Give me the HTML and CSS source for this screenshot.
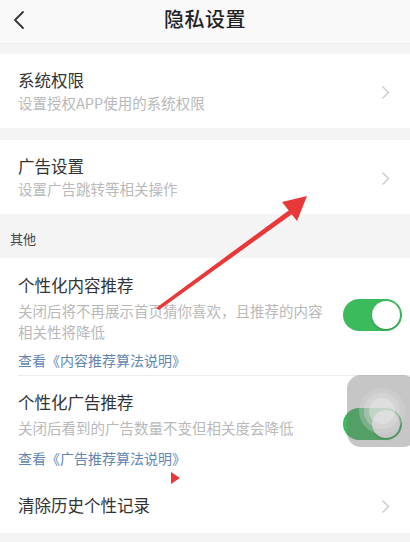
FILE: index.html
```html
<!DOCTYPE html>
<html lang="zh-CN">
<head>
  <meta charset="UTF-8" />
  <meta name="viewport" content="width=device-width, initial-scale=1.0"/>
  <title>隐私设置</title>
  <link rel="stylesheet" href="styles.css">
</head>
<body>
  <header class="nav">
    <svg class="back" width="12" height="20" viewBox="0 0 12 20"><path d="M10 2 L2 10 L10 18" fill="none" stroke="#333" stroke-width="1.8" stroke-linecap="round" stroke-linejoin="round"/></svg>
    <h1>隐私设置</h1>
  </header>

  <main class="page">
    <div class="card">
      <div class="row">
        <div class="text">
          <div class="title">系统权限</div>
          <div class="desc">设置授权APP使用的系统权限</div>
        </div>
        <svg class="chev" width="9" height="15" viewBox="0 0 9 15"><path d="M1.5 1.5 L7.5 7.5 L1.5 13.5" fill="none" stroke="#cfcfcf" stroke-width="1.5"/></svg>
      </div>
    </div>

    <div class="card">
      <div class="row">
        <div class="text">
          <div class="title">广告设置</div>
          <div class="desc">设置广告跳转等相关操作</div>
        </div>
        <svg class="chev" width="9" height="15" viewBox="0 0 9 15"><path d="M1.5 1.5 L7.5 7.5 L1.5 13.5" fill="none" stroke="#cfcfcf" stroke-width="1.5"/></svg>
      </div>
    </div>

    <div class="section-label">其他</div>

    <div class="card group">
      <div class="toggle-item">
        <div class="toggle-top">
          <div class="text">
            <div class="title">个性化内容推荐</div>
            <div class="desc">关闭后将不再展示首页猜你喜欢，且推荐的内容相关性将降低</div>
          </div>
          <span class="switch on"><span class="knob"></span></span>
        </div>
        <a class="link">查看《内容推荐算法说明》</a>
      </div>

      <div class="toggle-item second">
        <div class="toggle-top">
          <div class="text">
            <div class="title">个性化广告推荐</div>
            <div class="desc">关闭后看到的广告数量不变但相关度会降低</div>
          </div>
          <span class="switch on"><span class="knob"></span></span>
        </div>
        <a class="link">查看《广告推荐算法说明》</a>
      </div>

      <div class="row plain">
        <div class="title">清除历史个性记录</div>
        <svg class="chev" width="9" height="15" viewBox="0 0 9 15"><path d="M1.5 1.5 L7.5 7.5 L1.5 13.5" fill="none" stroke="#cfcfcf" stroke-width="1.5"/></svg>
      </div>
    </div>
  </main>

  <!-- floating assistive touch button -->
  <div class="assist">
    <span class="ring r1"></span>
    <span class="ring r2"></span>
    <span class="ring r3"></span>
  </div>

  <!-- red annotation marks -->
  <svg class="annot" width="410" height="542" viewBox="0 0 410 542">
    <path d="M156 308 L292 208 L295 212 L159 310 Z" fill="#e8383a"/>
    <path d="M307 196 L282 202 L297 221 Z" fill="#e8383a"/>
    <path d="M171 472 L180 478 L171 484 Z" fill="#e8383a"/>
  </svg>
</body>
</html>
```

FILE: styles.css
```css
:root {
  --bg: #f4f4f5;
  --fg: #333333;
  --subtle: #b9b9b9;
  --link: #5f87b2;
  --green: #3bbb5c;
  --line: #ededed;
}

* {
  margin: 0;
  padding: 0;
  box-sizing: border-box;
}

body {
  width: 410px;
  height: 542px;
  overflow: hidden;
  background: var(--bg);
  color: var(--fg);
  font-family: "Noto Sans CJK SC", "Noto Sans", sans-serif;
  position: relative;
}

.nav {
  height: 44px;
  background: #f9f9f9;
  border-bottom: 1px solid #ececef;
  display: flex;
  align-items: center;
  justify-content: center;
  position: relative;
}

.nav .back {
  position: absolute;
  left: 13px;
  top: 10px;
}

.nav h1 {
  font-size: 20px;
  font-weight: 500;
  color: #222;
  letter-spacing: 0.5px;
  margin-top: -6px;
}

.page {
  padding-top: 10px;
}

.card {
  background: #fff;
  margin-bottom: 12px;
}

.row {
  height: 74px;
  display: flex;
  align-items: center;
  justify-content: space-between;
  padding: 0 18px;
}

.row .chev {
  margin-top: 2px;
  margin-right: 2px;
}

.title {
  font-size: 16.5px;
  line-height: 22px;
  color: #333;
}

.desc {
  font-size: 14.5px;
  line-height: 20px;
  color: var(--subtle);
  margin-top: 2px;
}

.section-label {
  height: 44px;
  margin-top: -12px;
  padding: 15px 0 0 10px;
  font-size: 13px;
  line-height: 20px;
  color: #444;
}

.group {
  margin-bottom: 0;
}

.toggle-item {
  margin-left: 18px;
  padding: 16px 8px 5px 0;
  border-bottom: 1px solid var(--line);
}

.toggle-item.second {
  border-bottom: none;
  padding-top: 15px;
}

.toggle-top {
  display: flex;
  align-items: flex-start;
  gap: 20px;
}

.toggle-top .text {
  flex: 1;
}

.toggle-item .desc {
  margin-top: 4px;
  line-height: 21px;
}

.link {
  display: block;
  margin-top: 8px;
  font-size: 14px;
  line-height: 20px;
  color: var(--link);
}

.switch {
  width: 59px;
  height: 32px;
  border-radius: 16px;
  background: var(--green);
  position: relative;
  flex-shrink: 0;
  margin-top: 25px;
}

.switch .knob {
  position: absolute;
  top: 2px;
  right: 2px;
  width: 28px;
  height: 28px;
  border-radius: 50%;
  background: #fff;
  box-shadow: 0 1px 2px rgba(0, 0, 0, 0.25);
}

.second .switch {
  margin-top: 17px;
}

.row.plain {
  height: 56px;
  margin-top: 4px;
}

.assist {
  position: absolute;
  left: 347px;
  top: 375px;
  width: 70px;
  height: 72px;
  border-radius: 14px;
  background: rgba(120, 120, 120, 0.42);
}

.assist .ring {
  position: absolute;
  border-radius: 50%;
}

.assist .r1 {
  left: 12px;
  top: 13px;
  width: 46px;
  height: 46px;
  background: rgba(220, 220, 220, 0.3);
}

.assist .r2 {
  left: 17px;
  top: 18px;
  width: 36px;
  height: 36px;
  background: rgba(225, 225, 225, 0.35);
}

.assist .r3 {
  left: 22px;
  top: 23px;
  width: 26px;
  height: 26px;
  background: rgba(235, 235, 235, 0.45);
}

.annot {
  position: absolute;
  left: 0;
  top: 0;
  pointer-events: none;
}
```
